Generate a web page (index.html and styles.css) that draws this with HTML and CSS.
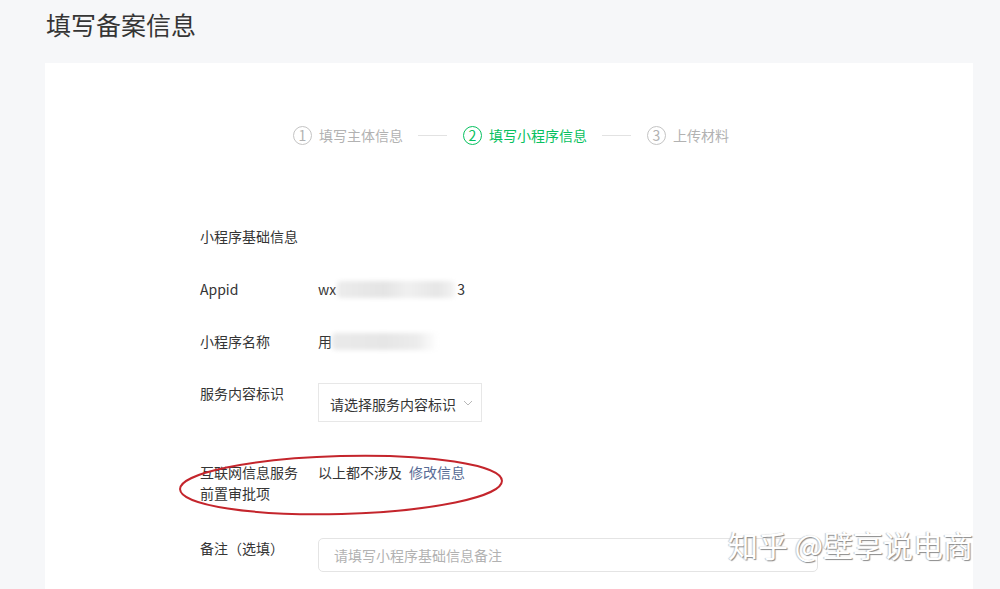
FILE: index.html
```html
<!DOCTYPE html>
<html lang="zh-CN">
<head>
    <meta charset="UTF-8">
    <title>填写备案信息</title>
    <link rel="stylesheet" href="styles.css">
</head>
<body>
    <h1 class="page-title">填写备案信息</h1>

    <div class="card">
        <!-- Steps -->
        <div class="steps">
            <div class="step">
                <span class="step-num">1</span>
                <span class="step-text">填写主体信息</span>
            </div>
            <span class="step-line"></span>
            <div class="step step-active">
                <span class="step-num">2</span>
                <span class="step-text">填写小程序信息</span>
            </div>
            <span class="step-line"></span>
            <div class="step">
                <span class="step-num">3</span>
                <span class="step-text">上传材料</span>
            </div>
        </div>

        <!-- Form -->
        <div class="form">
            <h3 class="form-title">小程序基础信息</h3>

            <div class="form-row">
                <div class="form-label">Appid</div>
                <div class="form-value">wx<span class="blur blur-appid"></span>3</div>
            </div>

            <div class="form-row">
                <div class="form-label">小程序名称</div>
                <div class="form-value">用<span class="blur blur-name"></span></div>
            </div>

            <div class="form-row row-select">
                <div class="form-label">服务内容标识</div>
                <div class="select">
                    <span>请选择服务内容标识</span>
                    <svg class="select-arrow" width="10" height="6" viewBox="0 0 10 6">
                        <path d="M1 1 L5 5 L9 1" fill="none" stroke="#b8b8b8" stroke-width="1"/>
                    </svg>
                </div>
            </div>

            <div class="form-row row-license">
                <div class="form-label label-wrap">互联网信息服务前置审批项</div>
                <div class="form-value">以上都不涉及<a class="link" href="#">修改信息</a></div>
                <svg class="mark" width="328" height="66" viewBox="0 0 328 66">
                    <ellipse cx="164" cy="33" rx="161" ry="29" fill="none" stroke="#c4252c" stroke-width="2" transform="rotate(-1.5 164 33)"/>
                </svg>
            </div>

            <div class="form-row row-note">
                <div class="form-label">备注（选填）</div>
                <input class="input" type="text" placeholder="请填写小程序基础信息备注">
            </div>
        </div>

        <div class="watermark">知乎 @壁享说电商</div>
    </div>
</body>
</html>
```

FILE: styles.css
```css
:root {
    --bg: #f6f7f9;
    --text: #353535;
    --text-light: #b2b2b2;
    --green: #07c160;
    --link: #576b95;
    --border: #e4e4e4;
}

* {
    margin: 0;
    padding: 0;
    box-sizing: border-box;
}

html, body {
    height: 589px;
    overflow: hidden;
}

body {
    font-family: "Noto Sans CJK SC", "Noto Sans", sans-serif;
    background-color: var(--bg);
    color: var(--text);
    font-size: 14px;
    padding: 0 27px 0 45px;
}

.page-title {
    font-size: 25px;
    font-weight: normal;
    line-height: 40px;
    padding: 4px 0 0 1px;
    color: #353535;
}

.card {
    position: relative;
    background-color: #fff;
    margin-top: 19px;
    height: 526px;
    padding-top: 61px;
}

/* Steps */
.steps {
    display: flex;
    align-items: center;
    justify-content: center;
    padding-left: 4px;
    color: var(--text-light);
}

.step {
    display: flex;
    align-items: center;
    gap: 7px;
}

.step-num {
    width: 19px;
    height: 19px;
    border: 1px solid #c4c4c4;
    border-radius: 50%;
    font-size: 14px;
    line-height: 17px;
    text-align: center;
}

.step-text {
    line-height: 22px;
}

.step-active {
    color: var(--green);
}

.step-active .step-num {
    border-color: var(--green);
}

.step-line {
    width: 29px;
    height: 1px;
    background-color: #e2e2e2;
    margin: 0 16px 0 15px;
}

/* Form */
.form {
    padding-left: 155px;
    margin-top: 80px;
}

.form-title {
    font-size: 14px;
    font-weight: normal;
    line-height: 20px;
    margin-bottom: 33px;
}

.form-row {
    position: relative;
    display: flex;
    align-items: flex-start;
    line-height: 20px;
    margin-bottom: 32px;
}

.form-label {
    width: 118px;
    padding-right: 14px;
    flex-shrink: 0;
}

.form-value {
    display: flex;
    align-items: center;
}

.blur {
    display: inline-block;
    height: 17px;
    border-radius: 4px;
    background: linear-gradient(90deg, #ececec, #e4e4e4 40%, #f0f0f0 60%, #e6e6e6 85%, #f4f4f4);
    filter: blur(2px);
}

.blur-appid {
    width: 118px;
    margin: 0 2px 0 1px;
}

.blur-name {
    width: 106px;
    background: linear-gradient(90deg, #eaeaea, #e6e6e6 50%, #ececec 80%, #fff);
}

.row-select {
    margin-bottom: 40px;
}

.select {
    display: flex;
    align-items: center;
    justify-content: space-between;
    width: 164px;
    height: 39px;
    border: 1px solid #e7e7e7;
    padding: 2px 8px 0 11px;
    color: var(--text);
}

.select-arrow {
    margin-top: -1px;
}

.row-license {
    line-height: 21px;
    margin-bottom: 34px;
}

.label-wrap {
    padding-right: 12px;
}

.link {
    color: var(--link);
    text-decoration: none;
    margin-left: 7px;
}

.mark {
    position: absolute;
    left: -23px;
    top: -10px;
}

.input {
    width: 500px;
    height: 34px;
    border: 1px solid var(--border);
    border-radius: 5px;
    padding: 0 15px;
    font-family: inherit;
    font-size: 14px;
    color: var(--text);
    outline: none;
}

.input::placeholder {
    color: var(--text-light);
}

.watermark {
    position: absolute;
    left: 683px;
    top: 461px;
    font-size: 30px;
    line-height: 40px;
    color: #fff;
    text-shadow: 1px 1px 1px #8a8a8a, -1px 0 1px #c8c8c8;
    white-space: nowrap;
}
```
